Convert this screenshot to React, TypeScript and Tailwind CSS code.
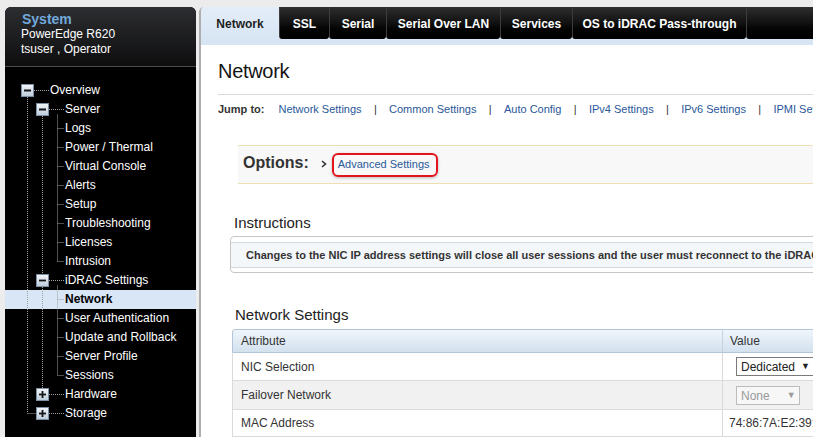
import React from "react";

type Row = { label: string; level: 0 | 1 | 2; box?: "minus" | "plus"; selected?: boolean };

const rows: Row[] = [
  { label: "Overview", level: 0, box: "minus" },
  { label: "Server", level: 1, box: "minus" },
  { label: "Logs", level: 2 },
  { label: "Power / Thermal", level: 2 },
  { label: "Virtual Console", level: 2 },
  { label: "Alerts", level: 2 },
  { label: "Setup", level: 2 },
  { label: "Troubleshooting", level: 2 },
  { label: "Licenses", level: 2 },
  { label: "Intrusion", level: 2 },
  { label: "iDRAC Settings", level: 1, box: "minus" },
  { label: "Network", level: 2, selected: true },
  { label: "User Authentication", level: 2 },
  { label: "Update and Rollback", level: 2 },
  { label: "Server Profile", level: 2 },
  { label: "Sessions", level: 2 },
  { label: "Hardware", level: 1, box: "plus" },
  { label: "Storage", level: 1, box: "plus" },
];

function TBox({ plus }: { plus?: boolean }) {
  return (
    <span className="w-[13px] h-[13px] shrink-0 border border-[#7d8fa3] bg-gradient-to-b from-[#f0f4f8] to-[#bfcddc] flex items-center justify-center">
      <svg width="11" height="11" viewBox="0 0 11 11">
        <path d="M2 5.5H9" stroke="#151515" strokeWidth="1.8" />
        {plus && <path d="M5.5 2V9" stroke="#151515" strokeWidth="1.8" />}
      </svg>
    </span>
  );
}

function TreeLines() {
  const c = (i: number) => 23.5 + 19 * i;
  const boxTop = (i: number) => 17 + 19 * i;
  const boxBot = (i: number) => 30 + 19 * i;
  const lines: string[] = [];
  lines.push(`M22.5 ${boxBot(0)}V${c(17)}`);
  lines.push(`M22.5 ${c(17)}H31`);
  lines.push(`M37.5 ${boxBot(1)}V${boxTop(10)}`);
  lines.push(`M37.5 ${boxBot(10)}V${boxTop(16)}`);
  lines.push(`M52.5 ${c(1) + 5}V${c(9)}`);
  lines.push(`M52.5 ${c(10) + 5}V${c(15)}`);
  lines.push(`M29 ${c(0)}H44`);
  [1, 10, 16, 17].forEach((i) => lines.push(`M44 ${c(i)}H59`));
  [2, 3, 4, 5, 6, 7, 8, 9, 11, 12, 13, 14, 15].forEach((i) => lines.push(`M52.5 ${c(i)}H59`));
  return (
    <svg className="absolute left-0 top-0 pointer-events-none z-10" width="191" height="370">
      <path d={lines.join(" ")} stroke="#a0a0a0" strokeWidth="1" strokeDasharray="1 1" fill="none" />
    </svg>
  );
}

const tabs = [
  { label: "SSL", w: "w-[50px]" },
  { label: "Serial", w: "w-[57px]" },
  { label: "Serial Over LAN", w: "w-[114px]" },
  { label: "Services", w: "w-[72px]" },
  { label: "OS to iDRAC Pass-through", w: "w-[174px]" },
];

const jumpLinks = ["Network Settings", "Common Settings", "Auto Config", "IPv4 Settings", "IPv6 Settings", "IPMI Settings", "VLAN Settings"];

export default function App() {
  return (
    <div
      className="w-[813px] h-[437px] overflow-hidden bg-[#ececec] flex pt-[7px] pl-[5px]"
      style={{ fontFamily: '"Liberation Sans", Arial, sans-serif' }}
    >
      {/* Sidebar */}
      <aside className="w-[191px] shrink-0 bg-black rounded-t-[6px] flex flex-col overflow-hidden">
        <div className="h-[60px] border-b border-[#4d4d4d] bg-gradient-to-b from-[#2d2e31] to-[#0e0e0f] pl-[17px] pt-[5px] leading-[15px]">
          <div className="text-[14px] font-bold text-[#72a9dc]">System</div>
          <div className="text-[12px] text-white -ml-[1px]">PowerEdge R620</div>
          <div className="text-[12px] text-white -ml-[1px]">tsuser , Operator</div>
        </div>
        <div className="relative pt-[14px]">
          <TreeLines />
          {rows.map((r) => (
            <div
              key={r.label}
              className={`h-[19px] flex items-center text-[12px] leading-[19px] whitespace-nowrap ${
                r.selected ? "bg-[#d8e6f6] text-black font-bold" : "text-white"
              } ${r.level === 0 ? "pl-[16px]" : r.level === 1 ? "pl-[31px]" : "pl-[60px]"}`}
            >
              {r.box && <TBox plus={r.box === "plus"} />}
              <span className={r.level === 2 ? "" : "ml-[16px]"}>{r.label}</span>
            </div>
          ))}
        </div>
      </aside>

      {/* Main */}
      <main className="ml-[3px] flex-1 bg-white border-l-2 border-[#adadad] rounded-tl-[5px] overflow-hidden">
        {/* Tabs */}
        <div className="flex h-[38px] bg-gradient-to-b from-[#e3edf8] to-[#d6e4f3]">
          <div className="w-[78px] shrink-0 pt-[10px] text-center text-[12px] leading-[14px] font-bold text-[#1e1e1e]">
            Network
          </div>
          {tabs.map((t) => (
            <div
              key={t.label}
              className={`${t.w} shrink-0 h-[32px] pt-[1px] flex items-center justify-center whitespace-nowrap text-[12px] font-bold text-white bg-gradient-to-b from-[#2f2f2f] via-[#111111] to-[#000000] border-l border-[#3d3d3d] rounded-b-[3px]`}
            >
              {t.label}
            </div>
          ))}
          <div className="flex-1 h-[32px] bg-gradient-to-b from-[#2f2f2f] via-[#111111] to-[#000000] border-l border-[#3d3d3d] rounded-bl-[3px]" />
        </div>

        {/* Title */}
        <div className="pl-[17px]">
          <div className="mt-[14px] text-[20px] leading-[24px] text-[#151515] tracking-[-0.3px]">Network</div>
          <div className="mt-[11px] border-t border-[#d9d9d9]" />
          <div className="mt-[7px] flex items-center text-[11px] leading-[14px] whitespace-nowrap">
            <span className="font-bold text-[#333]">Jump to:</span>
            <span className="ml-[14px] flex items-center">
              {jumpLinks.map((l, i) => (
                <React.Fragment key={l}>
                  {i > 0 && <span className="mx-[12.3px] text-[#333]">|</span>}
                  <span className="text-[#2a5899]">{l}</span>
                </React.Fragment>
              ))}
            </span>
          </div>
        </div>

        {/* Options */}
        <div className="mt-[29px] ml-[37px] w-[700px] h-[39px] border-y border-[#eedfb3] bg-[#f8f8f8] flex items-center pl-[5px] pb-[3px]">
          <span className="text-[16px] font-bold text-[#333]">Options:</span>
          <svg className="ml-[12px] mt-[2px]" width="6" height="8" viewBox="0 0 6 8">
            <path d="M1 1L4.5 4L1 7" stroke="#333" strokeWidth="1.6" fill="none" />
          </svg>
          <span className="ml-[5px] mt-[3px] h-[24px] flex items-center pl-[4px] pr-[6px] border-2 border-[#e3141c] rounded-[6px] shadow-[0_1px_3px_rgba(0,0,0,0.25)] text-[11px] text-[#2a5899] whitespace-nowrap">
            Advanced Settings
          </span>
        </div>

        {/* Instructions */}
        <div className="mt-[30px] ml-[33px] text-[15px] leading-[18px] text-[#222]">Instructions</div>
        <div className="mt-[4px] ml-[29px] w-[800px] border border-[#c6c6c6] rounded-[4px] pt-[5px] pb-[4px]">
          <div className="h-[26px] border-y border-[#d3d9e0] bg-[#f4f7fa] flex items-center pl-[15px] text-[11px] font-bold text-[#333] whitespace-nowrap">
            Changes to the NIC IP address settings will close all user sessions and the user must reconnect to the iDRAC using the new IP address.
          </div>
        </div>

        {/* Network Settings */}
        <div className="mt-[33px] ml-[34px] text-[15px] leading-[18px] text-[#222]">Network Settings</div>
        <div className="mt-[5px] ml-[31px] w-[700px] text-[12px] text-[#333]">
          <div className="flex h-[24px] border border-[#b3c5d7] rounded-t-[3px] bg-gradient-to-b from-[#eff5fb] to-[#d3e1ee]">
            <div className="w-[490px] shrink-0 pl-[8px] flex items-center border-r border-[#c3d2e0]">Attribute</div>
            <div className="flex-1 pl-[7px] flex items-center">Value</div>
          </div>
          <div className="flex h-[28px] border-x border-b border-[#dadada] bg-white">
            <div className="w-[490px] shrink-0 pl-[8px] flex items-center border-r border-[#dadada]">NIC Selection</div>
            <div className="flex-1 pl-[13px] pt-[4px]">
              <div className="w-[78px] h-[19px] border border-[#7a7a7a] bg-white flex items-center pl-[4px] text-[#222] whitespace-nowrap">
                Dedicated <span className="ml-[6px] text-[9px]">▼</span>
              </div>
            </div>
          </div>
          <div className="flex h-[29px] border-x border-b border-[#dadada] bg-[#f1f1f1]">
            <div className="w-[490px] shrink-0 pl-[8px] flex items-center border-r border-[#dadada]">Failover Network</div>
            <div className="flex-1 pl-[13px] pt-[5px]">
              <div className="w-[64px] h-[19px] border border-[#bcbcbc] bg-[#f7f7f7] flex items-center pl-[4px] text-[#9a9a9a] whitespace-nowrap">
                None <span className="ml-[17px] text-[9px]">▼</span>
              </div>
            </div>
          </div>
          <div className="flex h-[27px] border-x border-b border-[#dadada] bg-white">
            <div className="w-[490px] shrink-0 pl-[8px] flex items-center border-r border-[#dadada]">MAC Address</div>
            <div className="flex-1 pl-[6px] flex items-center whitespace-nowrap">74:86:7A:E2:39:C2</div>
          </div>
          <div className="flex h-[28px] border-x border-b border-[#dadada] bg-[#f1f1f1]">
            <div className="w-[490px] shrink-0 border-r border-[#dadada]" />
          </div>
        </div>
      </main>
    </div>
  );
}
